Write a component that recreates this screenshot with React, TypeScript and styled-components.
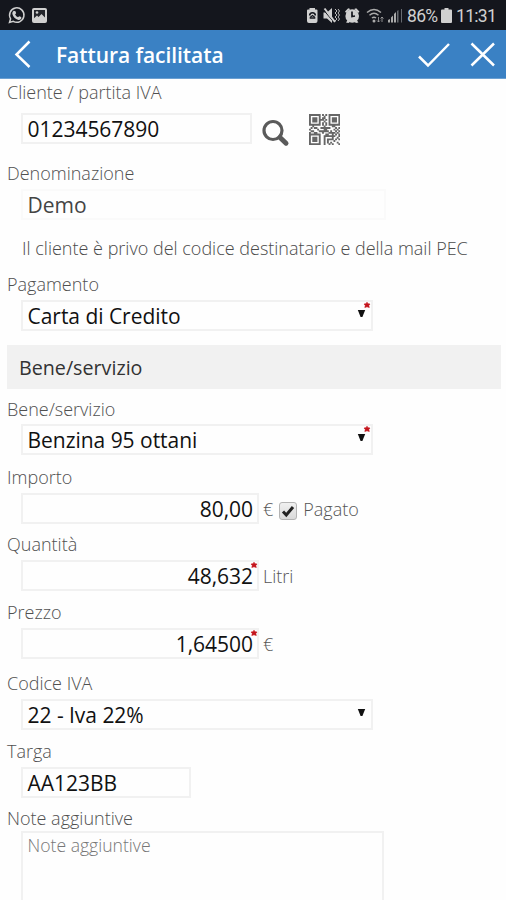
import React from "react";
import styled, { createGlobalStyle } from "styled-components";

const GlobalStyle = createGlobalStyle`
  * { box-sizing: border-box; }
  html, body { margin: 0; padding: 0; background: #fefefe; overflow: hidden; }
  body { font-family: "Open Sans", sans-serif; }
`;

const Screen = styled.main`
  width: 506px;
  height: 900px;
  overflow: hidden;
  display: flex;
  flex-direction: column;
  background: #fefefe;
`;

const StatusBar = styled.div`
  flex: none;
  height: 30px;
  background: #14161d;
  display: flex;
  align-items: center;
  justify-content: space-between;
  color: #d0d0d0;
`;

const StatusIcon = styled.svg`
  display: block;
  flex: none;
`;

const StatusText = styled.span<{ $width: number }>`
  display: block;
  width: ${(p) => p.$width}px;
  font: 400 17.5px/30px Roboto, sans-serif;
  letter-spacing: -0.7px;
  white-space: nowrap;
  padding-top: 2px;
`;

const AppBar = styled.header`
  flex: none;
  height: 49px;
  background: #3a81c4;
  border-bottom: 1px solid #6ba0d2;
  display: flex;
  align-items: center;
`;

const AppTitle = styled.h1`
  flex: 1;
  margin: 2px 0 0 24px;
  font-size: 21px;
  line-height: 48px;
  font-weight: 600;
  letter-spacing: -0.07px;
  color: #fff;
`;

const IconButton = styled.button<{ $left: number }>`
  display: block;
  flex: none;
  margin: 0 0 0 ${(p) => p.$left}px;
  padding: 0;
  border: 0;
  background: none;
  line-height: 0;
`;

const Form = styled.form`
  flex: 1;
  display: flex;
  flex-direction: column;
  padding: 0 5px 0 7px;
`;

const Field = styled.section<{ $top: number; $gap: number }>`
  flex: none;
  display: flex;
  flex-direction: column;
  gap: ${(p) => p.$gap}px;
  margin-top: ${(p) => p.$top}px;
`;

const Label = styled.label`
  font-size: 18px;
  line-height: 22px;
  font-weight: 300;
  color: #505050;
  white-space: nowrap;
`;

const Line = styled.div`
  display: flex;
  align-items: flex-start;
  padding-left: 14px;
`;

const Box = styled.div<{ $width: number; $right?: boolean; $disabled?: boolean }>`
  position: relative;
  width: ${(p) => p.$width}px;
  height: 31px;
  padding: 1px 4px 0 4.5px;
  border: 2px solid ${(p) => (p.$disabled ? "#fafafa" : "#f1f1f1")};
  background: #fefefe;
  font-size: 21px;
  line-height: 27px;
  letter-spacing: -0.03px;
  color: ${(p) => (p.$disabled ? "#444" : "#111")};
  text-align: ${(p) => (p.$right ? "right" : "left")};
  white-space: nowrap;
`;

const Caret = styled.svg`
  position: absolute;
  right: 5.5px;
  top: 7px;
`;

const RequiredMark = styled.svg<{ $right: number }>`
  position: absolute;
  right: ${(p) => p.$right}px;
  top: -1px;
`;

const Suffix = styled.span<{ $left: number }>`
  margin-left: ${(p) => p.$left}px;
  padding-top: 1px;
  font-size: 18px;
  line-height: 31px;
  font-weight: 300;
  color: #555;
`;

const CheckBox = styled.span`
  display: grid;
  place-items: center;
  width: 18px;
  height: 18px;
  margin: 9px 0 0 6px;
  border: 1px solid #b4b4b4;
  border-radius: 3px;
  background: linear-gradient(#f0f0f0, #dadada);
`;

const IconSlot = styled.span<{ $left: number; $top: number }>`
  display: block;
  line-height: 0;
  margin: ${(p) => p.$top}px 0 0 ${(p) => p.$left}px;
`;

const Notice = styled.p`
  flex: none;
  margin: 17px 0 0 15px;
  font-size: 18px;
  line-height: 22px;
  font-weight: 300;
  color: #4a4a4a;
  white-space: nowrap;
`;

const SectionTitle = styled.h2`
  flex: none;
  margin: 14px 0 0;
  height: 44px;
  padding: 1px 0 0 12px;
  background: #f1f1f1;
  font-size: 19.7px;
  line-height: 44px;
  font-weight: 400;
  color: #333;
`;

const Notes = styled.div`
  width: 363px;
  height: 90px;
  border: 2px solid #f1f1f1;
  padding-left: 4.5px;
  font-size: 17.6px;
  line-height: 24px;
  font-weight: 300;
  color: #777;
`;

const Star = ({ right = 0 }: { right?: number }) => (
  <RequiredMark $right={right} width="8" height="8" viewBox="0 0 8 8">
    <path d="M4 1.200 5 2.800l2 .2-1.200 1.500.5 2L4 5.800l-2.200.7.5-2L1 3l2-.2z" fill="#c4141c" stroke="#c4141c" strokeWidth=".6" />
  </RequiredMark>
);

const Arrow = () => (
  <Caret width="9" height="9" viewBox="0 0 9 9">
    <path d="M.8 1h7.400L5.400 8H3.600z" fill="#111" />
  </Caret>
);

const QR_ROWS = [
  "1111111010101111111",
  "1000001001001000001",
  "1011101011001011101",
  "1011101110101011101",
  "1011101001001011101",
  "1000001010101000001",
  "1111111010101111111",
  "0010000001000011000",
  "0101100111111000101",
  "1000010001100001010",
  "0110001111110100101",
  "1001100010001111010",
  "1111111000110010101",
  "1000001001111111001",
  "1011101001000010010",
  "1011101001011110101",
  "1011101001010001000",
  "1000001001010100010",
  "1111111001001010001",
];

const QrCode = () => (
  <StatusIcon width="31" height="31" viewBox="0 0 19 19">
    <path
      d={QR_ROWS.map((row, y) =>
        row.split("").map((c, x) => (c === "1" ? `M${x} ${y}h1.15v1.15h-1.15z` : "")).join("")
      ).join("")}
      fill="#666"
    />
  </StatusIcon>
);

const StatusLeft = () => (
  <StatusIcon width="60" height="30" viewBox="0 0 60 30">
    <path d="M9.500 22.500l1.100-3.700a7.200 7.200 0 1 1 2.700 2.600z" fill="none" stroke="#d0d0d0" strokeWidth="1.500" />
    <path d="M13.700 10.800l1.800.5.600 2-1 1.200q1 2 2.900 2.800l1.200-1.100 2 .9.200 1.400q-1 1.700-3 1.400-4.900-1.200-6.100-6.100-.1-2 1.400-3z" fill="#d0d0d0" />
    <rect x="32" y="8" width="15" height="15" rx="2" fill="#d0d0d0" />
    <path d="M34 10h11v7.500l-3.500-3.500-3 3-1.500-1.500-3 2.700z" fill="#24262c" />
    <circle cx="37" cy="12.500" r="1.300" fill="#d0d0d0" />
  </StatusIcon>
);

const StatusSymbols = () => (
  <StatusIcon width="102" height="30" viewBox="300 0 102 30">
    <g fill="#d0d0d0">
      <path d="M308.500 8h5.500v1.500h1.500q1 0 1 1V21q0 2-2 2h-6.500q-2 0-2-2V10.500q0-1 1-1h1.500z" />
      <path d="M322.500 12.500h3.500l5-4.500v15l-5-4.500h-3.500z" />
      <circle cx="351.200" cy="16" r="6.800" />
      <path d="M344 11.500l3.200-3.200 2 .8-4 4zM358.400 11.500l-3.200-3.200-2 .8 4 4zM345 22.500l2-3 2 2-1.500 1.500zM357.400 22.500l-2-3-2 2 1.500 1.500z" />
    </g>
    <path d="M308.700 15.500a2.800 2.800 0 0 1 5.600 0M308.700 18h5.600" fill="none" stroke="#14161d" strokeWidth="1.600" />
    <path d="M309 17.500l2.500-2 2.500 2" fill="none" stroke="#14161d" strokeWidth="1.200" />
    <path d="M323 10.500l10.500 12.500" stroke="#14161d" strokeWidth="1" />
    <path d="M323.500 8.500l10.500 13.500" stroke="#d0d0d0" strokeWidth="2" />
    <path d="M334 9l2 2-2 2 2 2-2 2 2 2-2 2M337 9l1.500 2-1.500 2 1.500 2-1.500 2 1.500 2-1.500 2" fill="none" stroke="#b8b8b8" />
    <path d="M351 11.500v5l3-.5" fill="none" stroke="#14161d" strokeWidth="1.700" />
    <g fill="none" stroke="#aaa" strokeWidth="1.500">
      <path d="M366 12.500q7-6 14 0M368.500 15.200q4.500-3.800 9 0M371 18q2-1.600 4 0" />
      <path d="M377.500 17v5m-1.500-1.500l1.500 1.500 1.500-1.500M381 22v-5m-1.500 1.500l1.500-1.500 1.500 1.500" strokeWidth=".8" />
    </g>
    <circle cx="373" cy="21" r="1.500" fill="#aaa" />
    <path d="M387 22.500v-2.500l2-1v3.500zM390 22.500v-5l2-2v7zM393 22.500v-8.500l2-2v10.500z" fill="#aaa" />
    <path d="M396 22.500V11l1.500-1v12.500zM400 22.500V9h1v13.500z" fill="#666a70" />
  </StatusIcon>
);

const Battery = () => (
  <StatusIcon width="18" height="30" viewBox="0 0 18 30">
    <path d="M6.500 8h4v1.500h2.500q1 0 1 1V22q0 1-1 1H4q-1 0-1-1V10.500q0-1 1-1h2.500z" fill="#d0d0d0" />
  </StatusIcon>
);

const StatusGroup = styled.div`
  display: flex;
  align-items: center;
  padding-right: 8px;
`;

const StatusCharge = styled.div`
  display: flex;
  align-items: center;
  margin-left: 4px;
`;

export default function App() {
  return (
    <>
      <GlobalStyle />
      <Screen>
        <StatusBar>
          <StatusLeft />
          <StatusGroup>
            <StatusSymbols />
            <StatusCharge>
              <StatusText $width={31}>86%</StatusText>
              <Battery />
            </StatusCharge>
            <StatusText $width={42}>11:31</StatusText>
          </StatusGroup>
        </StatusBar>
        <AppBar>
          <IconButton $left={12} type="button" aria-label="Indietro">
            <svg width="20" height="30" viewBox="0 0 20 30">
              <path d="M17.500 2.500L4.500 15.500l13 12.500" fill="none" stroke="#fff" strokeWidth="2.500" />
            </svg>
          </IconButton>
          <AppTitle>Fattura facilitata</AppTitle>
          <IconButton $left={0} type="button" aria-label="Conferma">
            <svg width="34" height="28" viewBox="0 0 34 28">
              <path d="M3 16.500l9 9L33 4" fill="none" stroke="#fff" strokeWidth="2.500" />
            </svg>
          </IconButton>
          <IconButton $left={20} type="button" aria-label="Chiudi">
            <svg width="36" height="28" viewBox="0 0 36 28">
              <path d="M1.500 3.500L24 25.500M24 3.500L1.500 25.500" fill="none" stroke="#fff" strokeWidth="2.500" />
            </svg>
          </IconButton>
        </AppBar>
        <Form>
          <Field $top={2} $gap={10}>
            <Label>Cliente / partita IVA</Label>
            <Line>
              <Box $width={231}>01234567890</Box>
              <IconSlot $left={10} $top={6}>
                <svg width="28" height="30" viewBox="0 0 28 30">
                  <circle cx="11" cy="11.500" r="9" fill="none" stroke="#5a5a5a" strokeWidth="3.200" />
                  <path d="M18 18.500l6 5.700" stroke="#5a5a5a" strokeWidth="5" strokeLinecap="round" />
                </svg>
              </IconSlot>
              <IconSlot $left={19} $top={1}>
                <QrCode />
              </IconSlot>
            </Line>
          </Field>
          <Field $top={13} $gap={5}>
            <Label>Denominazione</Label>
            <Line><Box $width={365} $disabled>Demo</Box></Line>
          </Field>
          <Notice>Il cliente è privo del codice destinatario e della mail PEC</Notice>
          <Field $top={14} $gap={5}>
            <Label>Pagamento</Label>
            <Line><Box $width={352}>Carta di Credito<Arrow /><Star /></Box></Line>
          </Field>
          <SectionTitle>Bene/servizio</SectionTitle>
          <Field $top={9} $gap={4}>
            <Label>Bene/servizio</Label>
            <Line><Box $width={352}>Benzina 95 ottani<Arrow /><Star /></Box></Line>
          </Field>
          <Field $top={11} $gap={5}>
            <Label>Importo</Label>
            <Line>
              <Box $width={238} $right>80,00</Box>
              <Suffix $left={4}>€</Suffix>
              <CheckBox>
                <svg width="14" height="14" viewBox="0 0 14 14">
                  <path d="M2 7.500l3.300 3.500L12 3" fill="none" stroke="#222" strokeWidth="3" />
                </svg>
              </CheckBox>
              <Suffix $left={6}>Pagato</Suffix>
            </Line>
          </Field>
          <Field $top={8} $gap={5}>
            <Label>Quantità</Label>
            <Line><Box $width={238} $right>48,632<Star right={-1} /></Box><Suffix $left={4}>Litri</Suffix></Line>
          </Field>
          <Field $top={9} $gap={5}>
            <Label>Prezzo</Label>
            <Line><Box $width={238} $right>1,64500<Star right={-1} /></Box><Suffix $left={4}>€</Suffix></Line>
          </Field>
          <Field $top={12} $gap={5}>
            <Label>Codice IVA</Label>
            <Line><Box $width={352}>22 - Iva 22%<Arrow /></Box></Line>
          </Field>
          <Field $top={10} $gap={5}>
            <Label>Targa</Label>
            <Line><Box $width={170}>AA123BB</Box></Line>
          </Field>
          <Field $top={9} $gap={2}>
            <Label>Note aggiuntive</Label>
            <Line><Notes>Note aggiuntive</Notes></Line>
          </Field>
        </Form>
      </Screen>
    </>
  );
}
